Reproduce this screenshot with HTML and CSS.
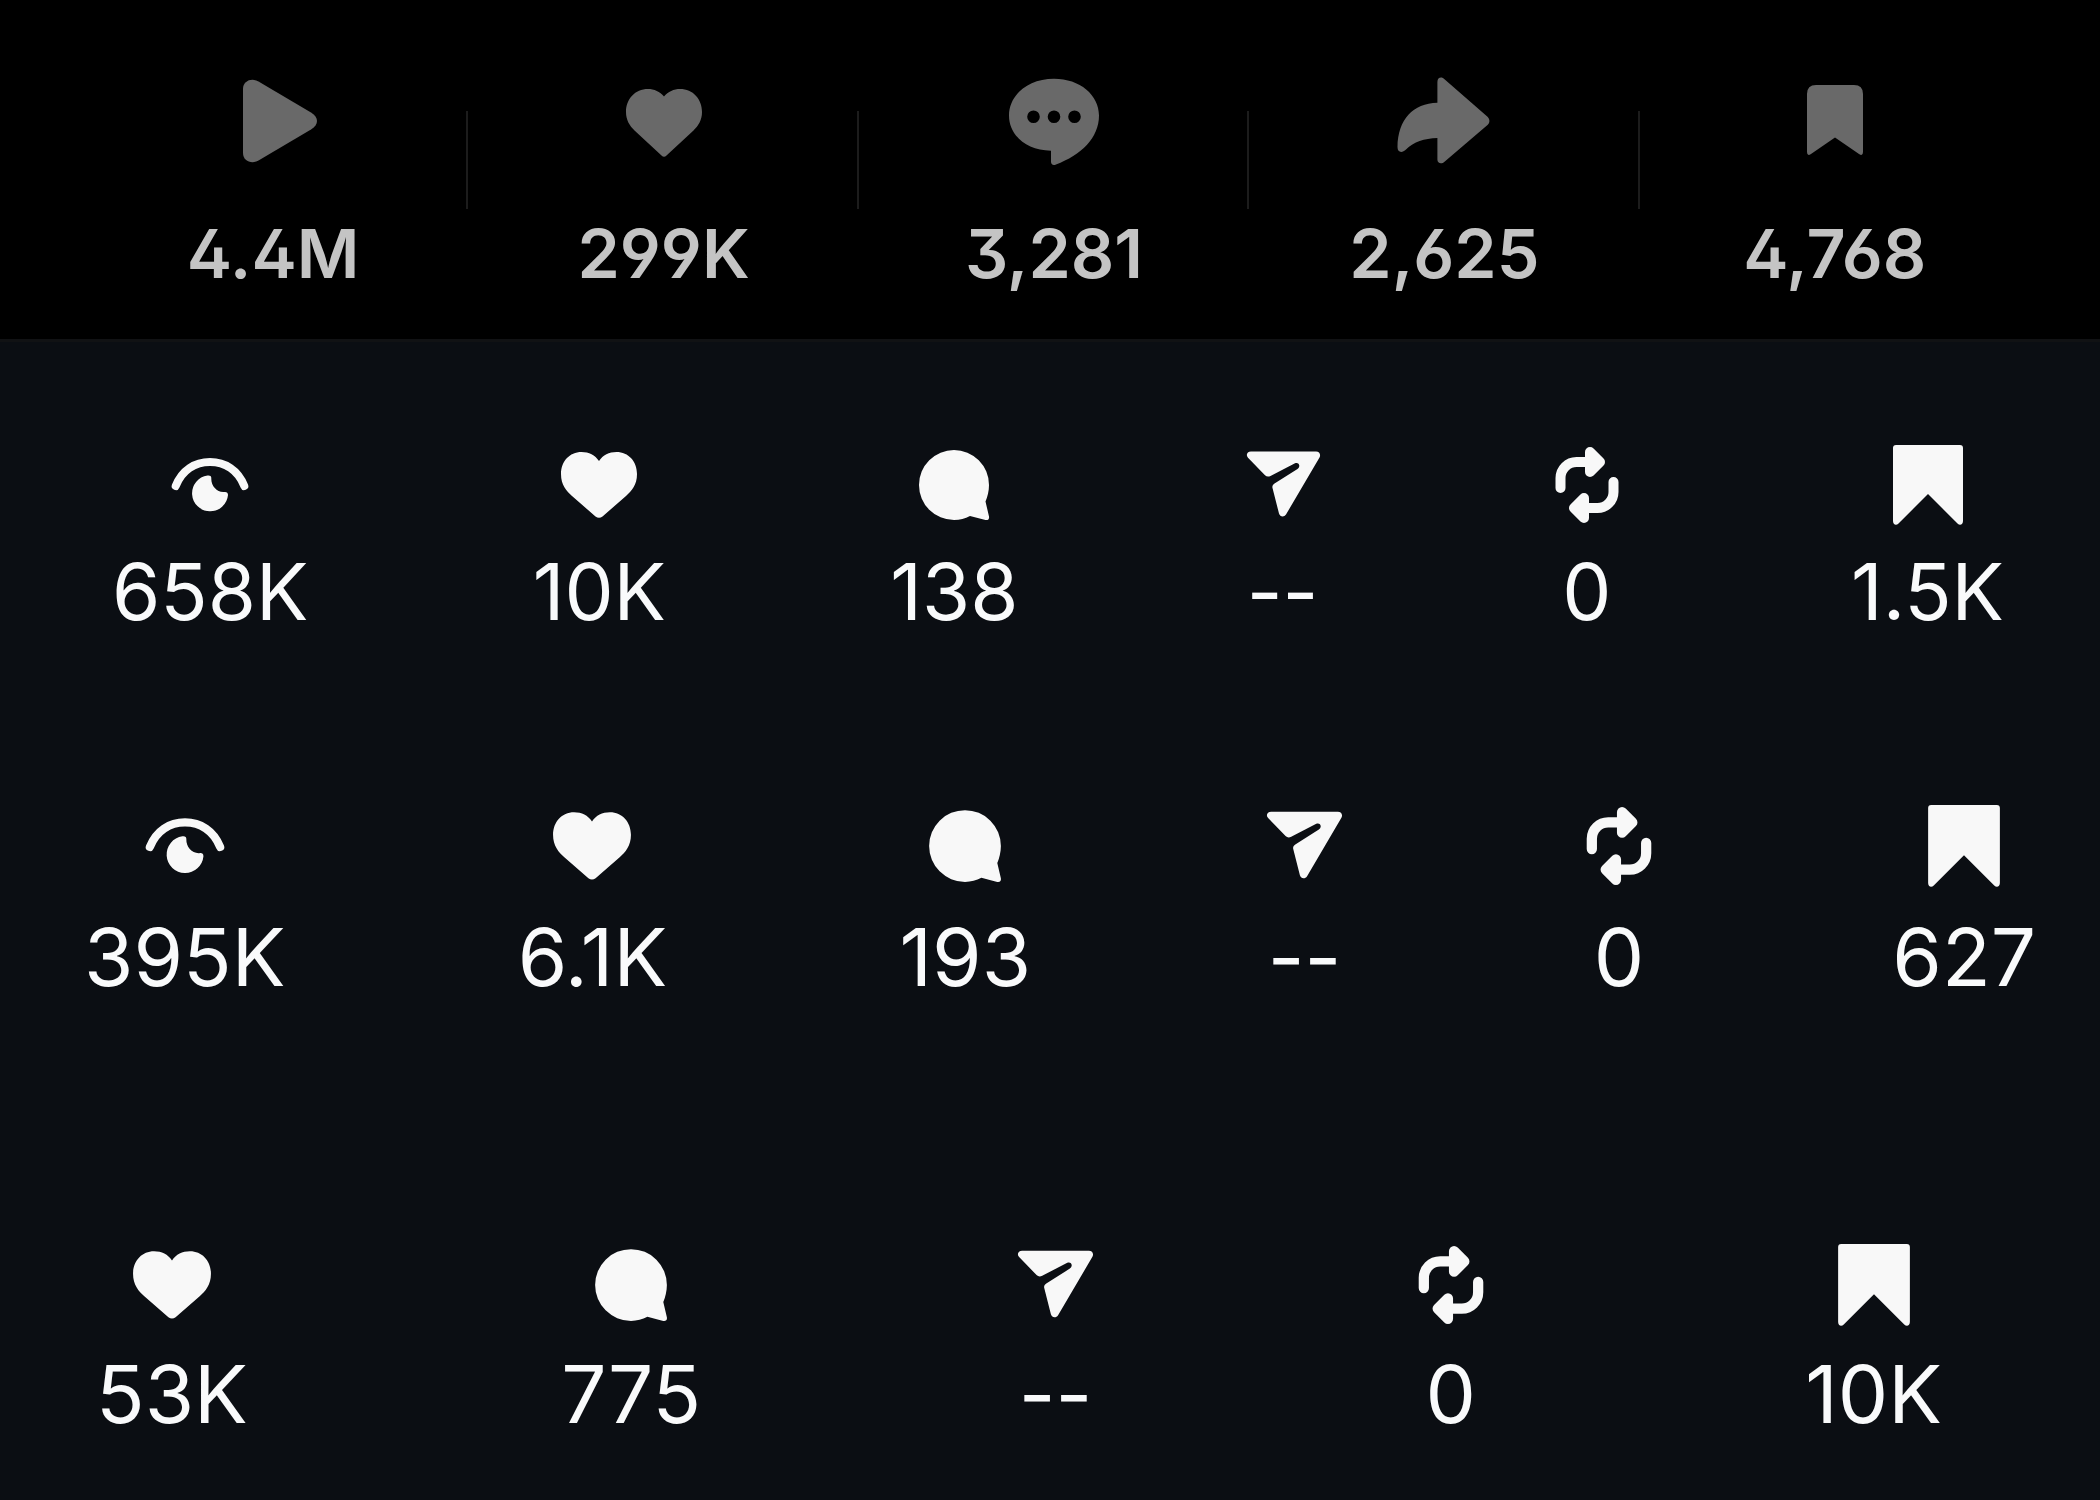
FILE: index.html
```html
<!DOCTYPE html>
<html lang="en">
<head>
<meta charset="utf-8">
<meta name="viewport" content="width=device-width, initial-scale=1">
<title>Post statistics</title>
<link rel="stylesheet" href="styles.css">
</head>
<body>
<svg class="sprite" aria-hidden="true">
  <symbol id="play" viewBox="0 0 96 96"><path d="M18 16C18 8 26.500 4.500 33.500 8.500L86 39.500C94 44.500 94 51.500 86 56.500L33.500 87.500C26.500 91.500 18 88 18 80Z"/></symbol>
  <symbol id="like" viewBox="0 0 96 96"><path d="M48 23.500C44 18.500 38 16 32 16C19 16 10 26 10 39C10 47 13.500 52.500 18.500 57.500L45.500 82.500Q48 85 50.500 82.500L77.500 57.500C82.500 52.500 86 47 86 39C86 26 77 16 64 16C58 16 52 18.500 48 23.500Z"/></symbol>
  <symbol id="reply" viewBox="0 0 96 96"><path fill-rule="evenodd" d="M48 5.700C22 5.700 3 22 3 42.500C3 62 20 77.500 45 77.700V88.500C45 91.500 47 92.800 50 91.500C75 82 93 65 93 42.500C93 22 74 5.700 48 5.700ZM21.200 43.700a6.300 6.300 0 1 0 12.600 0a6.300 6.300 0 1 0 -12.600 0ZM41.700 43.700a6.300 6.300 0 1 0 12.600 0a6.300 6.300 0 1 0 -12.600 0ZM62.200 43.700a6.300 6.300 0 1 0 12.600 0a6.300 6.300 0 1 0 -12.600 0Z"/></symbol>
  <symbol id="forward" viewBox="0 0 96 96"><path d="M41.400 29.700V9C41.400 4.500 45.500 3.300 48.500 6.200L91.800 44C94 46.500 94 49.500 91.800 51.700L48.500 88.800C45.500 91.500 41.400 90.500 41.400 86.500V65C28 65.500 18 68.500 10 76.500C6 80.500 1.500 79.500 1.500 74C2 46 17 30.500 41.400 29.700Z"/></symbol>
  <symbol id="mark" viewBox="0 0 96 96"><path d="M29 12H67Q76 12 76 21V79Q76 83.500 72 81L48 64.500L24 81Q20 83.500 20 79V21Q20 12 29 12Z"/></symbol>
  <symbol id="eye" viewBox="0 0 80 80"><path d="M5.700 41C12 25 25 17 40 17S68 25 74.300 41" fill="none" stroke="currentColor" stroke-width="8" stroke-linecap="round"/><path d="M37.500 30.500A18 18 0 1 0 58 50C58 47.500 56.500 46.600 54 47C47 47.500 41 41 41.300 33.500C41.500 31 40 30.200 37.500 30.500Z"/></symbol>
  <symbol id="heart" viewBox="0 0 80 80"><path d="M40 16C36 10 30 7 22.500 7C10.500 7 2 16.500 2 29C2 40 7.500 46 13 51L36.500 71.500Q40 74 43.500 71.500L67 51C72.500 46 78 40 78 29C78 16.500 69.500 7 57.500 7C50 7 44 10 40 16Z"/></symbol>
  <symbol id="comment" viewBox="0 0 80 80"><path d="M75 40A35 35 0 1 0 40 75C46 75 51 73.500 56 71L71.500 75C74 75.500 75.500 74 75 71.500L71.500 56.500C73.500 52 75 46 75 40Z"/></symbol>
  <symbol id="send" viewBox="0 0 80 80"><path d="M8 6.500H73C76.500 6.500 78 9.500 76.500 12.500L43 69.500C41 72.500 37 72 36 68.500L29.500 43C29 41 30 39.500 31.500 38.500L54.500 24C58 21.500 56 16.800 52 18.300L27.500 31C25.500 32 23.500 31.800 22 30.300L5 12.700C2.500 10 4.200 6.500 8 6.500Z"/></symbol>
  <symbol id="repost" viewBox="0 0 80 80"><g stroke="currentColor" stroke-width="10" stroke-linecap="round" stroke-linejoin="round"><path fill="none" d="M13.500 43V33A16 16 0 0 1 29.500 17H45"/><path d="M43 7L53 17L43 27Z"/><path fill="none" d="M66.500 37V47A16 16 0 0 1 50.500 63H35"/><path d="M37 73L27 63L37 53Z"/></g></symbol>
  <symbol id="bookmark" viewBox="0 0 80 80"><path d="M8 0H72Q75 0 75 3V76C75 79.500 72 81 69.500 78.500L40 49L10.500 78.500C8 81 5 79.500 5 76V3Q5 0 8 0Z"/></symbol>
</svg>

<section class="summary" aria-label="Totals">
  <ul class="summary-list">
    <li class="stat"><svg class="icon" role="img" aria-label="Plays"><use href="#play"/></svg><span class="value">4.4M</span></li>
    <li class="stat"><svg class="icon" role="img" aria-label="Likes"><use href="#like"/></svg><span class="value">299K</span></li>
    <li class="stat"><svg class="icon" role="img" aria-label="Comments"><use href="#reply"/></svg><span class="value">3,281</span></li>
    <li class="stat"><svg class="icon" role="img" aria-label="Shares"><use href="#forward"/></svg><span class="value">2,625</span></li>
    <li class="stat"><svg class="icon" role="img" aria-label="Saves"><use href="#mark"/></svg><span class="value">4,768</span></li>
  </ul>
</section>

<main class="posts">
  <ul class="post post-first">
    <li class="stat"><svg class="icon" role="img" aria-label="Views"><use href="#eye"/></svg><span class="value">658K</span></li>
    <li class="stat"><svg class="icon" role="img" aria-label="Likes"><use href="#heart"/></svg><span class="value">10K</span></li>
    <li class="stat"><svg class="icon" role="img" aria-label="Comments"><use href="#comment"/></svg><span class="value">138</span></li>
    <li class="stat"><svg class="icon" role="img" aria-label="Sends"><use href="#send"/></svg><span class="value">--</span></li>
    <li class="stat"><svg class="icon" role="img" aria-label="Reposts"><use href="#repost"/></svg><span class="value">0</span></li>
    <li class="stat"><svg class="icon" role="img" aria-label="Saves"><use href="#bookmark"/></svg><span class="value">1.5K</span></li>
  </ul>
  <ul class="post post-second">
    <li class="stat"><svg class="icon" role="img" aria-label="Views"><use href="#eye"/></svg><span class="value">395K</span></li>
    <li class="stat"><svg class="icon" role="img" aria-label="Likes"><use href="#heart"/></svg><span class="value">6.1K</span></li>
    <li class="stat"><svg class="icon" role="img" aria-label="Comments"><use href="#comment"/></svg><span class="value">193</span></li>
    <li class="stat"><svg class="icon" role="img" aria-label="Sends"><use href="#send"/></svg><span class="value">--</span></li>
    <li class="stat"><svg class="icon" role="img" aria-label="Reposts"><use href="#repost"/></svg><span class="value">0</span></li>
    <li class="stat"><svg class="icon" role="img" aria-label="Saves"><use href="#bookmark"/></svg><span class="value">627</span></li>
  </ul>
  <ul class="post post-third">
    <li class="stat"><svg class="icon" role="img" aria-label="Likes"><use href="#heart"/></svg><span class="value">53K</span></li>
    <li class="stat"><svg class="icon" role="img" aria-label="Comments"><use href="#comment"/></svg><span class="value">775</span></li>
    <li class="stat"><svg class="icon" role="img" aria-label="Sends"><use href="#send"/></svg><span class="value">--</span></li>
    <li class="stat"><svg class="icon" role="img" aria-label="Reposts"><use href="#repost"/></svg><span class="value">0</span></li>
    <li class="stat"><svg class="icon" role="img" aria-label="Saves"><use href="#bookmark"/></svg><span class="value">10K</span></li>
  </ul>
</main>
</body>
</html>
```
FILE: styles.css
```css
* {
  box-sizing: border-box;
}

body {
  margin: 0;
  background: #0b0e13;
  color: #f9fafb;
  font-family: Inter, "Liberation Sans", sans-serif;
}

ul {
  margin: 0;
  padding: 0;
  list-style: none;
}

.sprite {
  display: none;
}

.stat {
  display: flex;
  flex-direction: column;
  align-items: center;
}

.icon {
  display: block;
  color: #f8f8f8;
  fill: currentColor;
  overflow: visible;
}

/* Totals strip */
.summary {
  padding: 73px 70px 52px 78px;
  background: #000;
  border-bottom: 3px solid #111214;
}

.summary-list {
  display: grid;
  grid-template-columns: repeat(5, 1fr);
}

.summary .stat {
  gap: 50px;
  background: linear-gradient(#1c1c1c, #1c1c1c) right 38px / 2px 98px no-repeat;
}

.summary .stat:last-child {
  background: none;
}

.summary .icon {
  width: 96px;
  height: 96px;
  color: #696969;
}

.summary .value {
  color: #c4c4c4;
  font-size: 68px;
  font-weight: 600;
  line-height: 68px;
  font-feature-settings: "ss01";
}

/* Per-post rows */
.posts {
  padding-top: 103px;
}

.post {
  display: flex;
  justify-content: space-between;
}

.post .stat {
  gap: 28px;
}

.post .icon {
  width: 82px;
  height: 82px;
}

.post .value {
  font-size: 80px;
  line-height: 80px;
}

.post-first {
  padding: 0 96px 0 112px;
}

.post-first .icon {
  width: 80px;
  height: 80px;
}

.post-first .value {
  font-size: 78px;
  line-height: 78px;
}

.post-second {
  padding: 0 64px 0 84px;
  margin-top: 174px;
}

.post-second .stat {
  gap: 30px;
}

.post-third {
  padding: 0 158px 0 96px;
  margin-top: 247px;
}
```
